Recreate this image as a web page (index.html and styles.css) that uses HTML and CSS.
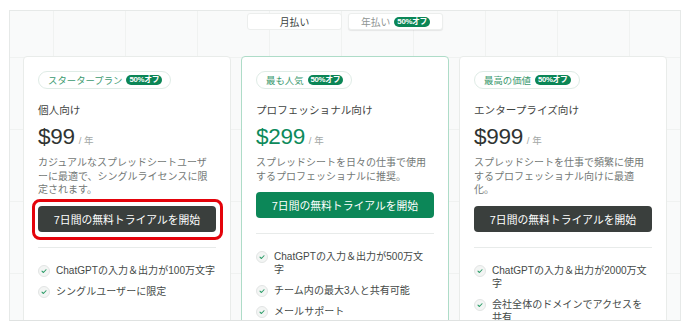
FILE: index.html
```html
<!DOCTYPE html>
<html lang="ja">
<head>
<meta charset="utf-8">
<link rel="stylesheet" href="styles.css">
</head>
<body>
<div class="frame">
  <div class="toggle">
    <div class="tg tg-active">月払い</div>
    <div class="tg tg-off">年払い <span class="badge">50%オフ</span></div>
  </div>
  <div class="cards">
    <div class="card">
      <div class="pill">スタータープラン <span class="badge">50%オフ</span></div>
      <div class="title">個人向け</div>
      <div class="price"><span class="amt">$99</span><span class="per">/ 年</span></div>
      <p class="desc">カジュアルなスプレッドシートユーザーに最適で、シングルライセンスに限定されます。</p>
      <div class="btn-wrap hl"><div class="btn btn-dark">7日間の無料トライアルを開始</div></div>
      <div class="divider"></div>
      <ul class="feat">
        <li><span class="chk"><svg viewBox="0 0 12 12"><path d="M3.6 6.2 5.3 7.8 8.4 4.5"/></svg></span><span>ChatGPTの入力＆出力が100万文字</span></li>
        <li><span class="chk"><svg viewBox="0 0 12 12"><path d="M3.6 6.2 5.3 7.8 8.4 4.5"/></svg></span><span>シングルユーザーに限定</span></li>
      </ul>
    </div>
    <div class="card card-pop">
      <div class="pill">最も人気 <span class="badge">50%オフ</span></div>
      <div class="title">プロフェッショナル向け</div>
      <div class="price"><span class="amt amt-green">$299</span><span class="per">/ 年</span></div>
      <p class="desc">スプレッドシートを日々の仕事で使用するプロフェッショナルに推奨。</p>
      <div class="btn-wrap"><div class="btn btn-green">7日間の無料トライアルを開始</div></div>
      <div class="divider"></div>
      <ul class="feat feat-narrow">
        <li><span class="chk"><svg viewBox="0 0 12 12"><path d="M3.6 6.2 5.3 7.8 8.4 4.5"/></svg></span><span>ChatGPTの入力＆出力が500万文字</span></li>
        <li><span class="chk"><svg viewBox="0 0 12 12"><path d="M3.6 6.2 5.3 7.8 8.4 4.5"/></svg></span><span>チーム内の最大3人と共有可能</span></li>
        <li><span class="chk"><svg viewBox="0 0 12 12"><path d="M3.6 6.2 5.3 7.8 8.4 4.5"/></svg></span><span>メールサポート</span></li>
      </ul>
    </div>
    <div class="card">
      <div class="pill">最高の価値 <span class="badge">50%オフ</span></div>
      <div class="title">エンタープライズ向け</div>
      <div class="price"><span class="amt">$999</span><span class="per">/ 年</span></div>
      <p class="desc">スプレッドシートを仕事で頻繁に使用するプロフェッショナル向けに最適化。</p>
      <div class="btn-wrap"><div class="btn btn-dark">7日間の無料トライアルを開始</div></div>
      <div class="divider"></div>
      <ul class="feat">
        <li><span class="chk"><svg viewBox="0 0 12 12"><path d="M3.6 6.2 5.3 7.8 8.4 4.5"/></svg></span><span>ChatGPTの入力＆出力が2000万文字</span></li>
        <li><span class="chk"><svg viewBox="0 0 12 12"><path d="M3.6 6.2 5.3 7.8 8.4 4.5"/></svg></span><span>会社全体のドメインでアクセスを共有</span></li>
      </ul>
    </div>
  </div>
</div>
</body>
</html>
```

FILE: styles.css
```css
* { box-sizing: border-box; }
html, body { margin: 0; padding: 0; background: #ffffff; }
body {
  font-family: "Liberation Sans", "Noto Sans CJK JP", sans-serif;
  color: #3f4442;
  padding: 10px 6px 0 9px;
}
.frame {
  width: 672px;
  height: 311px;
  overflow: hidden;
  border: 1px solid #e6e9e8;
  border-bottom-color: #dfe2e1;
  background-color: #f9fafa;
  background-image:
    linear-gradient(to right, #f0f2f1 1px, transparent 1px),
    linear-gradient(to bottom, #f0f2f1 1px, transparent 1px);
  background-size: 72px 72px;
  background-position: 43px 46px;
  padding: 2px 13px 0 13px;
}
.toggle {
  display: flex;
  justify-content: center;
  gap: 6px;
}
.tg {
  width: 95px;
  height: 17px;
  background: #fff;
  border: 1px solid #eceeed;
  border-radius: 3px;
  display: flex;
  align-items: center;
  justify-content: center;
  gap: 4px;
  font-size: 9.8px;
}
.tg-active { color: #3a3f3d; }
.tg-off { color: #8f9593; box-shadow: 0 1px 1px rgba(0,0,0,0.08); }
.badge {
  display: inline-flex;
  align-items: center;
  height: 10px;
  padding: 0 3px;
  border-radius: 5px;
  background: #0b8656;
  color: #fff;
  font-size: 7.8px;
  font-weight: bold;
  line-height: 10px;
  letter-spacing: -0.3px;
}
.cards {
  margin-top: 26px;
  display: grid;
  grid-template-columns: repeat(3, 208px);
  gap: 10px;
}
.card {
  background: #fff;
  border: 1px solid #e9ecea;
  border-radius: 4px;
  padding: 13px 14px 20px 14px;
  height: 290px;
}
.card-pop {
  border: 1.5px solid #aedcc8;
}
.pill {
  display: inline-flex;
  align-items: center;
  gap: 4px;
  height: 18px;
  padding: 0 8px 0 9px;
  border: 1px solid #dfece6;
  border-radius: 9px;
  color: #3b9a6f;
  font-size: 9.4px;
  background: #fff;
}
.title {
  margin-top: 14px;
  font-size: 10.6px;
  line-height: 14px;
  color: #3f4442;
}
.price {
  margin-top: 7px;
  display: flex;
  align-items: baseline;
  gap: 4px;
  height: 28px;
}
.amt {
  font-size: 22.5px;
  color: #2f3432;
  letter-spacing: -0.3px;
}
.amt-green { color: #0d8a5b; }
.per { font-size: 9.5px; color: #a3a8a6; }
.desc {
  margin: 4px 0 0 0;
  font-size: 10px;
  line-height: 13.5px;
  color: #737876;
}
.btn-wrap { position: relative; margin-top: 9px; }
.hl::after {
  content: "";
  position: absolute;
  left: -6px; right: -7px; top: -7px; bottom: -8px;
  border: 3px solid #e4030b;
  border-radius: 8px;
}
.btn {
  height: 26px;
  border-radius: 4px;
  display: flex;
  align-items: center;
  justify-content: center;
  color: #fff;
  font-size: 10.8px;
}
.btn-dark { background: #3a3f3d; }
.btn-green { background: #0c8758; }
.divider {
  margin-top: 15px;
  height: 1px;
  background: #e8ebea;
}
.feat {
  list-style: none;
  margin: 16px 0 0 0;
  padding: 0;
  display: flex;
  flex-direction: column;
  gap: 8px;
}
.feat-narrow { padding-right: 3px; }
.feat li {
  display: flex;
  align-items: flex-start;
  gap: 6px;
  font-size: 10.05px;
  line-height: 13px;
  color: #454a48;
}
.chk {
  flex: none;
  width: 12px;
  height: 12px;
  margin-top: 1px;
  border-radius: 50%;
  background: #f3f5f4;
  border: 1px solid #e2e5e4;
  display: flex;
}
.chk svg {
  width: 100%;
  height: 100%;
  fill: none;
  stroke: #2c9c68;
  stroke-width: 1.3;
  stroke-linecap: round;
  stroke-linejoin: round;
}
```
